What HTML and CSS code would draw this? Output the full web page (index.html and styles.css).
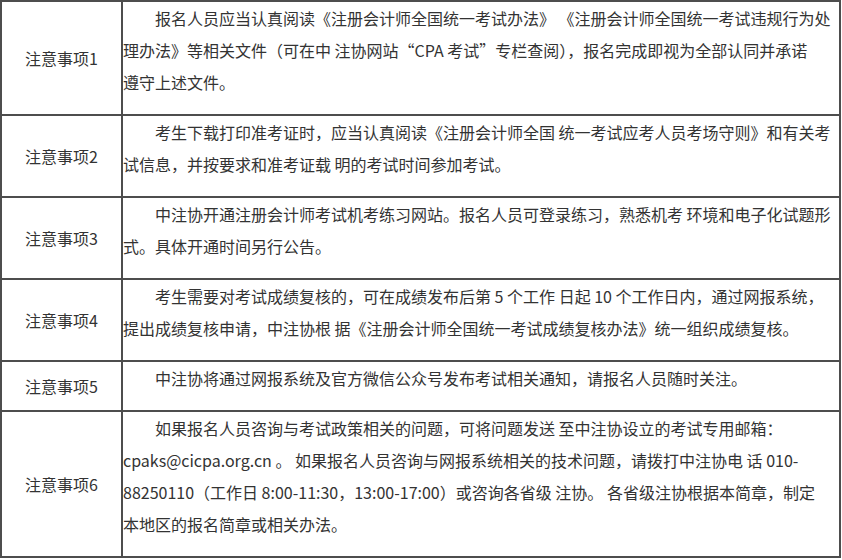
FILE: index.html
```
<!DOCTYPE html>
<html lang="zh-CN">
<head>
<meta charset="utf-8">
<title>注意事项</title>
<link rel="stylesheet" href="styles.css">
</head>
<body>
<table class="notice">
  <colgroup><col class="c-label"><col class="c-text"></colgroup>
  <tbody>
    <tr>
      <td class="label">注意事项1</td>
      <td class="text"><p>报名人员应当认真阅读《注册会计师全国统一考试办法》 《注册会计师全国统一考试违规行为处<br>理办法》等相关文件（可在中 注协网站“CPA 考试”专栏查阅），报名完成即视为全部认同并承诺<br>遵守上述文件。</p></td>
    </tr>
    <tr>
      <td class="label">注意事项2</td>
      <td class="text"><p>考生下载打印准考证时，应当认真阅读《注册会计师全国 统一考试应考人员考场守则》和有关考<br>试信息，并按要求和准考证载 明的考试时间参加考试。</p></td>
    </tr>
    <tr>
      <td class="label">注意事项3</td>
      <td class="text"><p>中注协开通注册会计师考试机考练习网站。报名人员可登录练习，熟悉机考 环境和电子化试题形<br>式。具体开通时间另行公告。</p></td>
    </tr>
    <tr>
      <td class="label">注意事项4</td>
      <td class="text"><p>考生需要对考试成绩复核的，可在成绩发布后第 5 个工作 日起 10 个工作日内，通过网报系统，<br>提出成绩复核申请，中注协根 据《注册会计师全国统一考试成绩复核办法》统一组织成绩复核。</p></td>
    </tr>
    <tr>
      <td class="label">注意事项5</td>
      <td class="text"><p>中注协将通过网报系统及官方微信公众号发布考试相关通知，请报名人员随时关注。</p></td>
    </tr>
    <tr>
      <td class="label">注意事项6</td>
      <td class="text"><p>如果报名人员咨询与考试政策相关的问题，可将问题发送 至中注协设立的考试专用邮箱：<br>cpaks@cicpa.org.cn 。 如果报名人员咨询与网报系统相关的技术问题，请拨打中注协电 话 010-<br>88250110（工作日 8:00-11:30，13:00-17:00）或咨询各省级 注协。 各省级注协根据本简章，制定<br>本地区的报名简章或相关办法。</p></td>
    </tr>
  </tbody>
</table>
</body>
</html>
```
FILE: styles.css
```
html, body {
  margin: 0;
  padding: 0;
  background: #ffffff;
}

body {
  font-family: "Noto Sans CJK SC", "Noto Sans", sans-serif;
  font-size: 16px;
  color: #333333;
}

.notice {
  border-collapse: collapse;
  table-layout: fixed;
  width: 841px;
}

.c-label {
  width: 121px;
}

.notice td {
  border: 2px solid #4d4d4d;
  padding: 0;
}

.label {
  text-align: center;
  vertical-align: middle;
  line-height: 24px;
}

.text {
  vertical-align: top;
  padding: 2px 1px 0 1px;
}

.text p {
  margin: 0 0 16px 0;
  line-height: 32px;
  text-indent: 2em;
  white-space: nowrap;
}
```
